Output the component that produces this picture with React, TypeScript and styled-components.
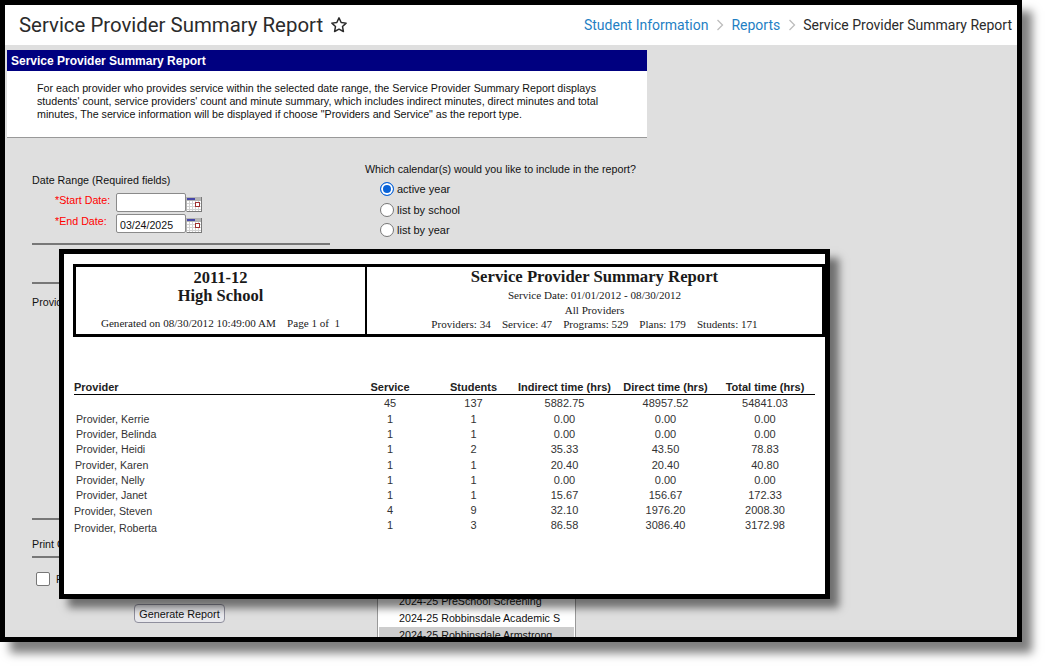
import React from 'react';
import styled, { createGlobalStyle } from 'styled-components';

const Global = createGlobalStyle`
  html, body { margin: 0; padding: 0; background: #fff; }
  body { width: 1049px; height: 667px; overflow: hidden; font-family: "Liberation Sans", Arial, sans-serif; }
`;

const Frame = styled.div`
  position: relative;
  box-sizing: border-box;
  width: 1022px;
  height: 642px;
  border: 5px solid #000;
  background: #dfdfdf;
  display: flex;
  flex-direction: column;
  box-shadow: 10px 11px 9px rgba(0, 0, 0, 0.5);
`;

const TopBar = styled.header`
  height: 40px;
  flex: none;
  background: #fff;
  display: flex;
  align-items: center;
  justify-content: space-between;
  padding: 0 5px 0 14px;
  font-family: Roboto, sans-serif;
`;

const TitleWrap = styled.div`
  display: flex;
  align-items: center;
  gap: 7px;
`;

const PageTitle = styled.h1`
  margin: 0;
  font-size: 20.4px;
  font-weight: 400;
  color: #2b2b2b;
`;

const Crumbs = styled.nav`
  display: flex;
  align-items: center;
  gap: 7.5px;
  font-size: 14px;
`;

const Crumb = styled.span<{ $link?: boolean }>`
  color: ${p => (p.$link ? '#1f7fc4' : '#2b2b2b')};
`;

const Main = styled.main`
  flex: 1;
  min-height: 0;
  overflow: hidden;
  padding: 5px 0 0 2px;
`;

const Panel = styled.section`
  width: 640px;
  height: 87px;
  background: #fff;
  border-bottom: 1px solid #999;
`;

const Banner = styled.h2`
  margin: 0;
  height: 21px;
  padding-left: 4px;
  background: #000080;
  color: #fff;
  font-size: 12px;
  font-weight: 700;
  line-height: 22px;
`;

const Description = styled.p`
  margin: 0;
  padding: 11px 30px 0 30px;
  font-size: 10.7px;
  line-height: 13px;
  color: #111;
`;

const Form = styled.div`
  display: grid;
  grid-template-columns: 333px 1fr;
  padding-left: 25px;
  font-size: 10.7px;
  color: #111;
`;

const LeftCol = styled.div`
  width: 298px;
  padding-top: 36px;
`;

const RightCol = styled.div`
  padding-top: 25px;
`;

const Caption = styled.div`
  height: 13px;
  line-height: 13px;
  margin-bottom: 6px;
`;

const Question = styled.div`
  height: 13px;
  line-height: 13px;
`;

const DateRow = styled.div`
  display: flex;
  align-items: flex-start;
  height: 21px;
`;

const DateLabel = styled.label`
  width: 84px;
  padding-left: 23px;
  box-sizing: border-box;
  color: #f00;
  line-height: 15px;
`;

const DateInput = styled.div`
  box-sizing: border-box;
  width: 70px;
  height: 19px;
  background: #fff;
  border: 1px solid #8a8a8a;
  border-radius: 2px;
  padding: 3px 0 0 3px;
  font-size: 10.6px;
  line-height: 14px;
  color: #111;
`;

const CalIcon = styled.svg`
  margin-top: 4px;
  flex: none;
`;

const Rule = styled.hr<{ $top: number; $bottom?: number }>`
  border: 0;
  height: 2px;
  background: #777;
  margin: ${p => p.$top}px 0 ${p => p.$bottom ?? 0}px;
`;

const Plain = styled.div`
  height: 13px;
  line-height: 13px;
`;

const CheckRow = styled.div`
  display: flex;
  align-items: center;
  gap: 6px;
  padding-left: 4px;
  margin-top: 14px;
`;

const Check = styled.span`
  box-sizing: border-box;
  width: 14px;
  height: 14px;
  background: #fff;
  border: 1px solid #777;
  border-radius: 2px;
`;

const GenerateButton = styled.button`
  display: block;
  box-sizing: border-box;
  width: 91px;
  height: 19px;
  margin: 18px 0 0 102px;
  padding: 0;
  background: #e9e9ed;
  border: 1px solid #8f8f9d;
  border-radius: 4px;
  font-family: "Liberation Sans", Arial, sans-serif;
  font-size: 10.8px;
  color: #111;
`;

const RadioRow = styled.div<{ $gap: number }>`
  display: flex;
  align-items: center;
  gap: 3px;
  height: 15px;
  margin: ${p => p.$gap}px 0 0 15px;
  font-size: 11px;
`;

const Radio = styled.span<{ $on?: boolean }>`
  box-sizing: border-box;
  width: 14px;
  height: 14px;
  border-radius: 50%;
  background: ${p => (p.$on ? '#0a63d8' : '#fff')};
  border: 1px solid ${p => (p.$on ? '#0a63d8' : '#777')};
  box-shadow: ${p => (p.$on ? 'inset 0 0 0 2px #fff' : 'none')};
`;

const ListBox = styled.div`
  box-sizing: border-box;
  width: 199px;
  height: 80px;
  margin: 353px 0 0 12px;
  padding: 2px 1px;
  background: #fff;
  border: 1px solid #999;
  font-size: 10.7px;
  color: #111;
`;

const ListItem = styled.div<{ $sel?: boolean }>`
  height: 17px;
  line-height: 17px;
  padding-left: 20px;
  white-space: nowrap;
  overflow: hidden;
  background: ${p => (p.$sel ? '#cdcdcd' : 'transparent')};
`;

const Overlay = styled.div`
  position: absolute;
  left: 54px;
  top: 244px;
  box-sizing: border-box;
  width: 771px;
  height: 350px;
  background: #fff;
  border: 5px solid #000;
  padding: 10px 0 0 9px;
  box-shadow: 9px 9px 8px rgba(0, 0, 0, 0.5);
`;

const ReportHead = styled.div`
  box-sizing: border-box;
  width: 752px;
  height: 73px;
  display: grid;
  grid-template-columns: 289px 1fr;
  border: 3px solid #000;
  font-family: "Liberation Serif", "Times New Roman", serif;
  color: #1a1a1a;
  text-align: center;
`;

const HeadCell = styled.div<{ $divided?: boolean }>`
  display: flex;
  flex-direction: column;
  align-items: center;
  border-left: ${p => (p.$divided ? '2px solid #000' : '0')};
`;

const School = styled.div`
  font-size: 16.5px;
  font-weight: 700;
  line-height: 18px;
  &:first-child { margin-top: 2px; }
`;

const ReportTitle = styled.div`
  font-size: 16.7px;
  font-weight: 700;
  line-height: 18px;
  margin-top: 1px;
`;

const HeadLine = styled.div<{ $top?: number }>`
  font-size: 11.1px;
  line-height: 14.5px;
  margin-top: ${p => p.$top ?? 0}px;
  white-space: pre;
`;

const TableHead = styled.div`
  display: grid;
  grid-template-columns: 276px 80px 87px 95px 107px 92px;
  width: 741px;
  margin: 44px 0 1px 1px;
  height: 13px;
  border-bottom: 1px solid #000;
  font-family: "Liberation Sans", Arial, sans-serif;
  font-size: 11px;
  font-weight: 700;
  line-height: 12px;
  color: #222;
`;

const Row = styled.div<{ $height?: number }>`
  display: grid;
  grid-template-columns: 276px 80px 87px 95px 107px 92px;
  margin-left: 1px;
  height: ${p => p.$height ?? 15.2}px;
  line-height: 15.2px;
  font-family: "Liberation Sans", Arial, sans-serif;
  font-size: 11px;
  color: #333;
`;

const Cell = styled.div`
  text-align: center;
  white-space: nowrap;
`;

const Name = styled.div<{ $left: number; $drop?: number }>`
  padding-left: ${p => p.$left}px;
  margin-top: ${p => p.$drop ?? 0}px;
  white-space: nowrap;
  font-size: 10.65px;
`;

const HeadName = styled.div`
  text-align: left;
`;

const Calendar = () => (
  <CalIcon width="16" height="16" viewBox="0 0 16 16" shapeRendering="crispEdges">
    <rect x="0" y="0" width="16" height="15" fill="#fff" />
    <rect x="0" y="0" width="16" height="4" fill="#b4b4b4" />
    <rect x="1" y="1" width="8" height="2" fill="#4646a8" />
    <path d="M1 6.5h14M1 9.5h14M1 12.5h14M3.5 4v10M6.5 4v10M9.5 4v10M12.5 4v10" stroke="#d2d2d2" fill="none" />
    <rect x="9.5" y="5.5" width="4" height="4" fill="#fff" stroke="#a03030" />
    <path d="M15.5 0v15M0 14.5h16" stroke="#7a7a7a" fill="none" />
    <path d="M0.5 0v15" stroke="#b4b4b4" fill="none" />
  </CalIcon>
);

const rows: [string, number, number, string, string, string, string, string][] = [
  ['Provider, Kerrie', 2, 0, '1', '1', '0.00', '0.00', '0.00'],
  ['Provider, Belinda', 2, 0, '1', '1', '0.00', '0.00', '0.00'],
  ['Provider, Heidi', 2, 0, '1', '2', '35.33', '43.50', '78.83'],
  ['Provider, Karen', 1, 0, '1', '1', '20.40', '20.40', '40.80'],
  ['Provider, Nelly', 2, 0, '1', '1', '0.00', '0.00', '0.00'],
  ['Provider, Janet', 2, 0, '1', '1', '15.67', '156.67', '172.33'],
  ['Provider, Steven', 0, 1, '4', '9', '32.10', '1976.20', '2008.30'],
  ['Provider, Roberta', -1, 3, '1', '3', '86.58', '3086.40', '3172.98'],
];

const Chevron = () => (
  <svg width="8" height="12" viewBox="0 0 8 12" fill="none" stroke="#bdbdbd" strokeWidth="1.3">
    <path d="M1.5 1l5 5-5 5" />
  </svg>
);

export default function App() {
  return (
    <>
      <Global />
      <Frame>
        <TopBar>
          <TitleWrap>
            <PageTitle>Service Provider Summary Report</PageTitle>
            <svg width="18" height="18" viewBox="0 0 24 24" fill="none" stroke="#2b2b2b" strokeWidth="2" strokeLinejoin="round">
              <path d="M12 2.5l2.9 6.1 6.6.9-4.8 4.6 1.2 6.6L12 17.6l-5.9 3.1 1.2-6.6L2.5 9.5l6.6-.9z" />
            </svg>
          </TitleWrap>
          <Crumbs>
            <Crumb $link>Student Information</Crumb>
            <Chevron />
            <Crumb $link>Reports</Crumb>
            <Chevron />
            <Crumb>Service Provider Summary Report</Crumb>
          </Crumbs>
        </TopBar>
        <Main>
          <Panel>
            <Banner>Service Provider Summary Report</Banner>
            <Description>
              For each provider who provides service within the selected date range, the Service Provider Summary Report displays students' count, service providers' count and minute summary, which includes indirect minutes, direct minutes and total minutes, The service information will be displayed if choose "Providers and Service" as the report type.
            </Description>
          </Panel>
          <Form>
            <LeftCol>
              <Caption>Date Range (Required fields)</Caption>
              <DateRow>
                <DateLabel>*Start Date:</DateLabel>
                <DateInput />
                <Calendar />
              </DateRow>
              <DateRow>
                <DateLabel>*End Date:</DateLabel>
                <DateInput>03/24/2025</DateInput>
                <Calendar />
              </DateRow>
              <Rule $top={8} />
              <Rule $top={37} $bottom={12} />
              <Plain>Provider</Plain>
              <Rule $top={209} $bottom={18} />
              <Plain>Print Options</Plain>
              <Rule $top={5} />
              <CheckRow><Check />Report</CheckRow>
              <GenerateButton>Generate Report</GenerateButton>
            </LeftCol>
            <RightCol>
              <Question>Which calendar(s) would you like to include in the report?</Question>
              <RadioRow $gap={5}><Radio $on />active year</RadioRow>
              <RadioRow $gap={6}><Radio />list by school</RadioRow>
              <RadioRow $gap={5}><Radio />list by year</RadioRow>
              <ListBox>
                <ListItem>2024-25 PreSchool Screening</ListItem>
                <ListItem>2024-25 Robbinsdale Academic S</ListItem>
                <ListItem $sel>2024-25 Robbinsdale Armstrong</ListItem>
              </ListBox>
            </RightCol>
          </Form>
        </Main>
        <Overlay>
          <ReportHead>
            <HeadCell>
              <School>2011-12</School>
              <School>High School</School>
              <HeadLine $top={11}>{'Generated on 08/30/2012 10:49:00 AM    Page 1 of  1'}</HeadLine>
            </HeadCell>
            <HeadCell $divided>
              <ReportTitle>Service Provider Summary Report</ReportTitle>
              <HeadLine $top={2}>Service Date: 01/01/2012 - 08/30/2012</HeadLine>
              <HeadLine>All Providers</HeadLine>
              <HeadLine>{'Providers: 34    Service: 47    Programs: 529    Plans: 179    Students: 171'}</HeadLine>
            </HeadCell>
          </ReportHead>
          <TableHead>
            <HeadName>Provider</HeadName>
            <Cell>Service</Cell>
            <Cell>Students</Cell>
            <Cell>Indirect time (hrs)</Cell>
            <Cell>Direct time (hrs)</Cell>
            <Cell>Total time (hrs)</Cell>
          </TableHead>
          <Row $height={16}>
            <span />
            <Cell>45</Cell>
            <Cell>137</Cell>
            <Cell>5882.75</Cell>
            <Cell>48957.52</Cell>
            <Cell>54841.03</Cell>
          </Row>
          {rows.map(r => (
            <Row key={r[0]}>
              <Name $left={r[1]} $drop={r[2]}>{r[0]}</Name>
              <Cell>{r[3]}</Cell>
              <Cell>{r[4]}</Cell>
              <Cell>{r[5]}</Cell>
              <Cell>{r[6]}</Cell>
              <Cell>{r[7]}</Cell>
            </Row>
          ))}
        </Overlay>
      </Frame>
    </>
  );
}
